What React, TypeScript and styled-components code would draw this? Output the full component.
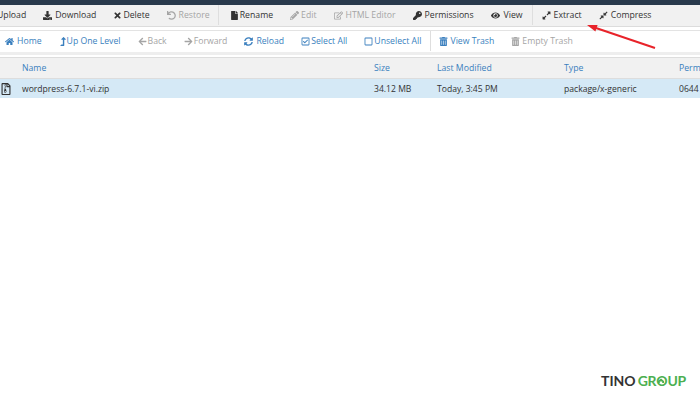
import { ReactNode } from "react";
import styled, { createGlobalStyle } from "styled-components";
import {
  FaUpload,
  FaDownload,
  FaTimes,
  FaUndo,
  FaFile,
  FaPencilAlt,
  FaRegEdit,
  FaKey,
  FaEye,
  FaExpandAlt,
  FaCompressAlt,
  FaHome,
  FaLevelUpAlt,
  FaArrowLeft,
  FaArrowRight,
  FaSyncAlt,
  FaRegCheckSquare,
  FaRegSquare,
  FaTrashAlt,
  FaRegFileArchive,
} from "react-icons/fa";

const GlobalStyle = createGlobalStyle`
  *, *::before, *::after {
    box-sizing: border-box;
  }
  html, body {
    margin: 0;
    padding: 0;
    background: #fff;
  }
  body {
    font-family: "Open Sans", "Liberation Sans", sans-serif;
  }
`;

const Page = styled.div`
  position: relative;
  width: 700px;
  height: 400px;
  overflow: hidden;
  background: #fff;
`;

const TopBar = styled.div`
  height: 5px;
  background: #293a4c;
`;

const Toolbar = styled.div`
  display: flex;
  align-items: center;
  height: 22px;
  margin-left: -15px;
  width: 760px;
  padding-bottom: 1px;
  background: #f1f1f1;
  border-bottom: 1px solid #dcdcdc;
`;

const NavBar = styled.div`
  display: flex;
  align-items: center;
  height: 25px;
  margin-top: 3px;
  padding-left: 5px;
  padding-bottom: 1px;
  background: #fff;
  border-top: 1px solid #e3e3e3;
  border-bottom: 3px solid #eeeeee;
`;

const Action = styled.span<{ $tone: "dark" | "muted" | "link" }>`
  display: inline-flex;
  align-items: center;
  margin-right: 17px;
  font-size: 8.7px;
  white-space: nowrap;
  color: ${(p) =>
    p.$tone === "dark" ? "#333333" : p.$tone === "muted" ? "#a5a5a5" : "#3a7fbe"};
`;

const IconSlot = styled.span<{ $width: number }>`
  display: inline-flex;
  align-items: center;
  width: ${(p) => p.$width}px;
  flex: none;
  font-size: 9px;
`;

const Divider = styled.span<{ $before: number; $after: number }>`
  align-self: stretch;
  width: 1px;
  background: #dedede;
  margin-left: ${(p) => p.$before - 17}px;
  margin-right: ${(p) => p.$after}px;
`;

const columns = "22px 352px 63px 127px 115px 1fr";

const TableHead = styled.div`
  display: grid;
  grid-template-columns: ${columns};
  align-items: center;
  height: 22px;
  margin-top: 2px;
  padding-bottom: 1px;
  background: #f1f1f1;
  border-top: 1px solid #dddddd;
  border-bottom: 1px solid #dddddd;
  font-size: 8.7px;
  color: #3a7fbe;
  white-space: nowrap;
`;

const FileRow = styled.div`
  display: grid;
  grid-template-columns: ${columns};
  align-items: center;
  height: 19px;
  background: #d5e9f6;
  font-size: 8.6px;
  color: #333333;
  white-space: nowrap;
`;

const FileIcon = styled.span`
  display: flex;
  align-items: center;
  font-size: 12px;
  color: #333333;
`;

const Callout = styled.svg`
  position: absolute;
  left: 580px;
  top: 18px;
`;

const Watermark = styled.div`
  position: absolute;
  left: 601px;
  top: 372px;
  font-family: "Lato", "Liberation Sans", sans-serif;
  font-size: 14px;
  line-height: 18px;
  font-weight: 700;
  color: #333333;
  white-space: nowrap;
`;

const Green = styled.span`
  margin-left: 2px;
  letter-spacing: -0.2px;
  color: #4caf50;
`;

const HouseMark = styled.svg`
  position: absolute;
  left: 57px;
  top: 6px;
`;

type Entry =
  | { icon: ReactNode; label: string; tone: "dark" | "muted" | "link"; slot: number }
  | { before: number; after: number };

const tools: Entry[] = [
  { icon: <FaUpload />, label: "Upload", tone: "dark", slot: 12 },
  { icon: <FaDownload />, label: "Download", tone: "dark", slot: 12 },
  { icon: <FaTimes />, label: "Delete", tone: "dark", slot: 10 },
  { icon: <FaUndo />, label: "Restore", tone: "muted", slot: 12 },
  { before: 8, after: 11 },
  { icon: <FaFile />, label: "Rename", tone: "dark", slot: 10 },
  { icon: <FaPencilAlt />, label: "Edit", tone: "muted", slot: 11 },
  { icon: <FaRegEdit />, label: "HTML Editor", tone: "muted", slot: 12 },
  { icon: <FaKey />, label: "Permissions", tone: "dark", slot: 12 },
  { icon: <FaEye />, label: "View", tone: "dark", slot: 13 },
  { before: 9, after: 9 },
  { icon: <FaExpandAlt />, label: "Extract", tone: "dark", slot: 12 },
  { icon: <FaCompressAlt />, label: "Compress", tone: "dark", slot: 12 },
];

const links: Entry[] = [
  { icon: <FaHome />, label: "Home", tone: "link", slot: 12 },
  { icon: <FaLevelUpAlt />, label: "Up One Level", tone: "link", slot: 8 },
  { icon: <FaArrowLeft />, label: "Back", tone: "muted", slot: 10 },
  { icon: <FaArrowRight />, label: "Forward", tone: "muted", slot: 10 },
  { icon: <FaSyncAlt />, label: "Reload", tone: "link", slot: 12 },
  { icon: <FaRegCheckSquare />, label: "Select All", tone: "link", slot: 10 },
  { icon: <FaRegSquare />, label: "Unselect All", tone: "link", slot: 10 },
  { before: 9, after: 8 },
  { icon: <FaTrashAlt />, label: "View Trash", tone: "link", slot: 11 },
  { icon: <FaTrashAlt />, label: "Empty Trash", tone: "muted", slot: 11 },
];

const renderEntries = (entries: Entry[]) =>
  entries.map((entry, i) =>
    "label" in entry ? (
      <Action key={entry.label} $tone={entry.tone}>
        <IconSlot $width={entry.slot}>{entry.icon}</IconSlot>
        {entry.label}
      </Action>
    ) : (
      <Divider key={i} $before={entry.before} $after={entry.after} />
    )
  );

export default function App() {
  return (
    <Page>
      <GlobalStyle />
      <TopBar />
      <Toolbar>{renderEntries(tools)}</Toolbar>
      <NavBar>{renderEntries(links)}</NavBar>
      <TableHead>
        <span />
        <span>Name</span>
        <span>Size</span>
        <span>Last Modified</span>
        <span>Type</span>
        <span>Perm</span>
      </TableHead>
      <FileRow>
        <FileIcon>
          <FaRegFileArchive />
        </FileIcon>
        <span>wordpress-6.7.1-vi.zip</span>
        <span>34.12 MB</span>
        <span>Today, 3:45 PM</span>
        <span>package/x-generic</span>
        <span>0644</span>
      </FileRow>
      <Callout width="80" height="34" viewBox="0 0 80 34">
        <path d="M75 30 L16 10" stroke="#e8232a" strokeWidth="2" fill="none" />
        <path d="M7 7 L17.6 6.9 L15.4 13.5 Z" fill="#e8232a" />
      </Callout>
      <Watermark>
        TINO<Green>GROUP</Green>
        <HouseMark width="6" height="5" viewBox="0 0 6 5">
          <path d="M0 3 L3 0.4 L6 3 V5 H4.2 V3.4 H1.8 V5 H0 Z" fill="#4caf50" />
        </HouseMark>
      </Watermark>
    </Page>
  );
}
